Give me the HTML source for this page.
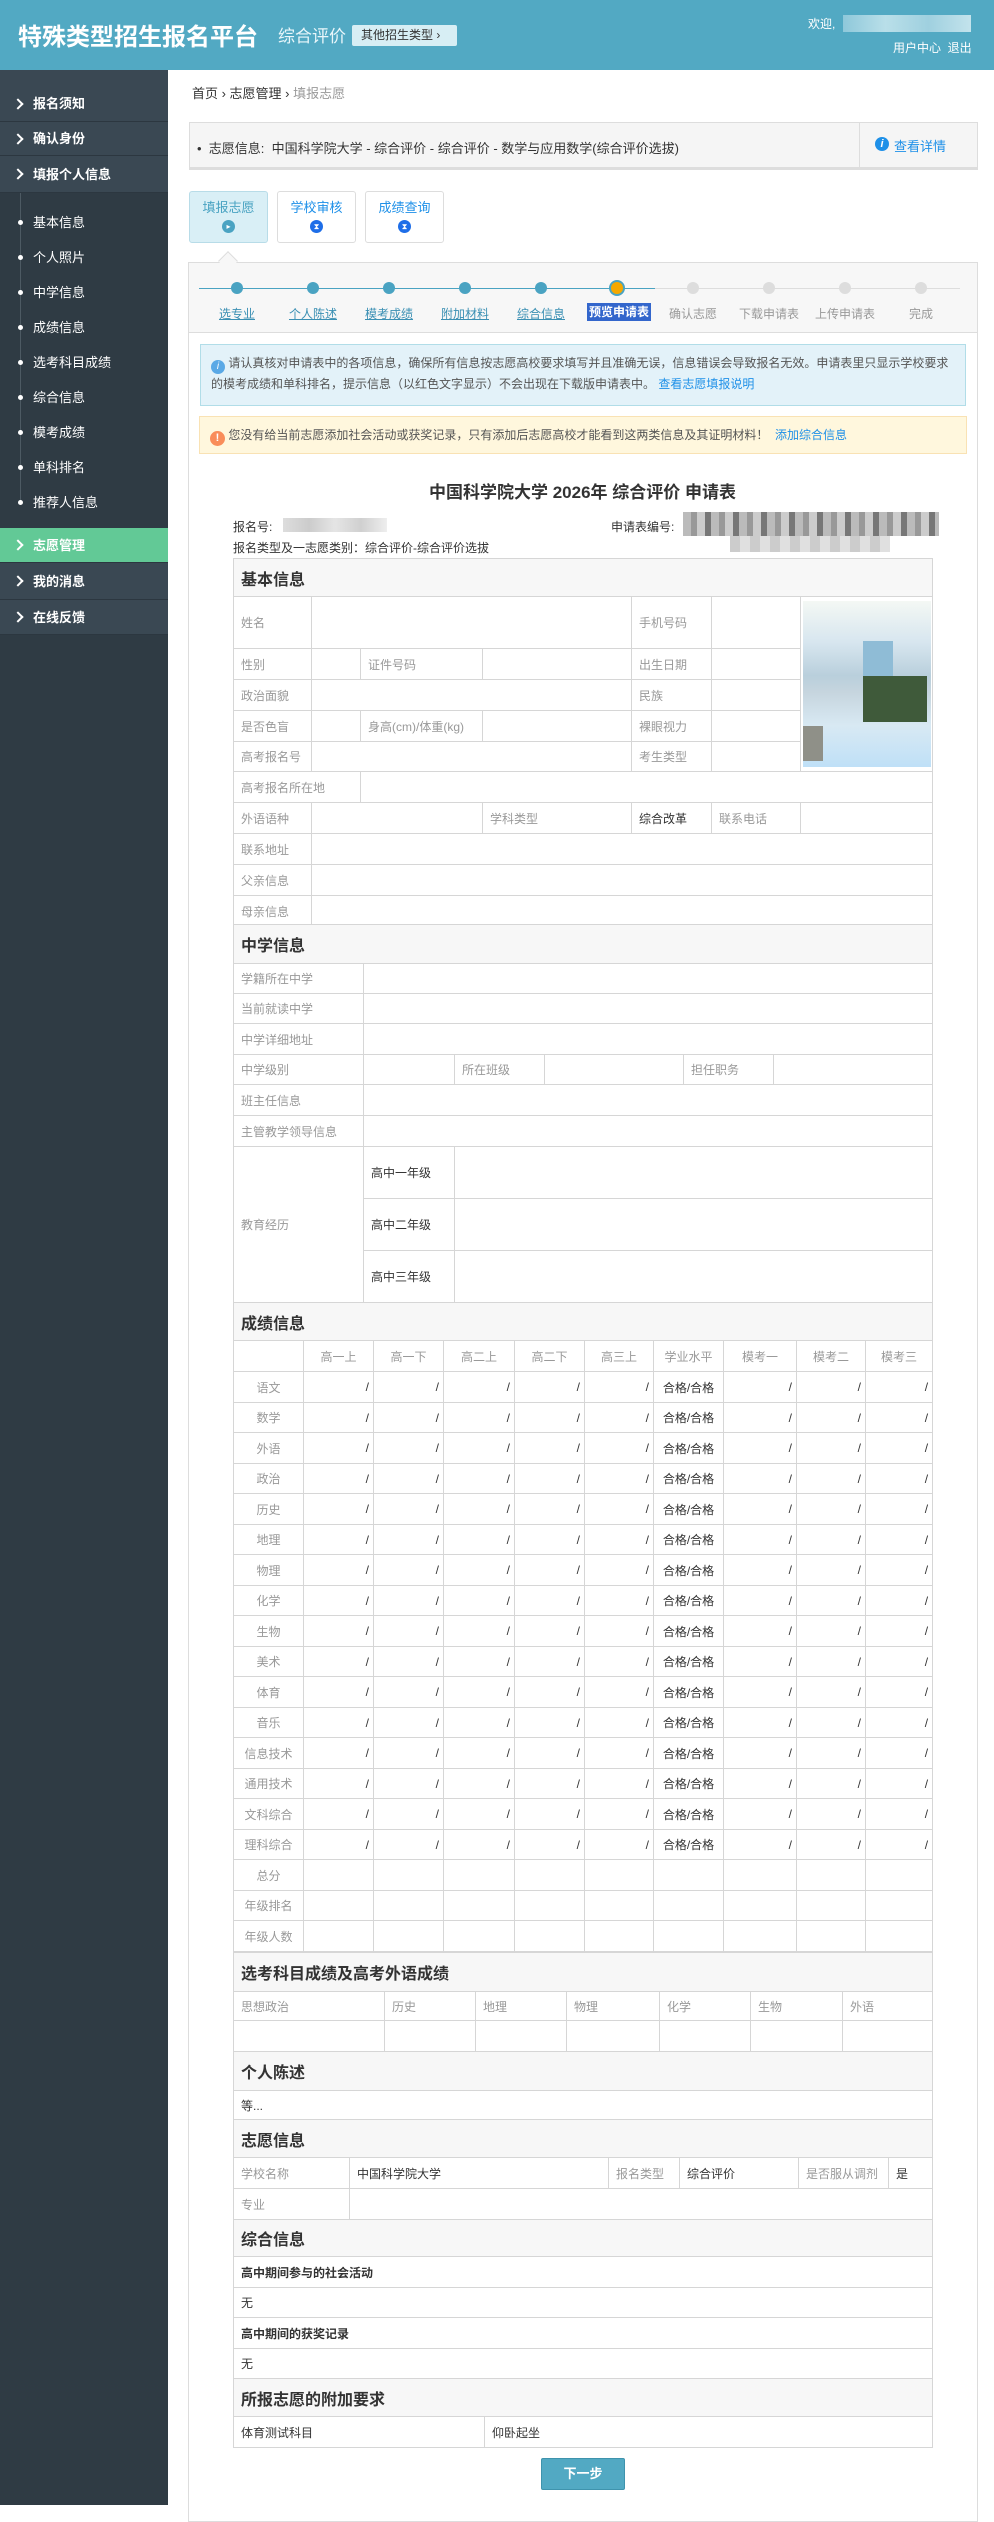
<!DOCTYPE html>
<html><head><meta charset="utf-8">
<style>
*{margin:0;padding:0;box-sizing:border-box}
body{width:994px;height:2505px;position:relative;background:#fff;font-family:"Liberation Sans","Noto Sans CJK SC",sans-serif;font-size:12px;color:#333;overflow:hidden}
.abs{position:absolute}
#hd{left:0;top:0;width:994px;height:70px;background:#52a9c3}
#sb{left:0;top:70px;width:168px;height:2435px;background:#2f3b44}
.top{position:absolute;left:0;width:168px;background:#3a4853;color:#fff;font-weight:bold;font-size:13px;padding-left:33px;border-bottom:1px solid #2c3740}
.top:before{content:"";position:absolute;left:14px;top:50%;width:6px;height:6px;border-right:2px solid #fff;border-top:2px solid #fff;transform:translateY(-50%) rotate(45deg)}
.top.first:before{top:34px}
.sub{position:absolute;left:33px;color:#fff;font-size:13px}
.sub:before{content:"";position:absolute;left:-15px;top:8px;width:5px;height:5px;border-radius:50%;background:#fff}
table{border-collapse:collapse;table-layout:fixed;position:absolute;left:233px;width:699px}
td{border:1px solid #d6d6d6;padding:0 7px;color:#999;font-size:12px;white-space:nowrap;overflow:hidden}
td.k{color:#333}
td.h{background:#f7f7f7;color:#333;font-size:16px;font-weight:bold;padding-left:7px}
.sc td{text-align:right;color:#333;padding-right:4px}
.sc td.l{text-align:center;color:#999;padding:0}
.sc td.c{text-align:center;padding:0}
.sc tr.hr td{text-align:center;color:#999;padding:0}
.sc tr{height:30px}
.sc tr.o{height:31px}
.step{position:absolute;top:282px;width:12px;height:12px;border-radius:50%;background:#4aa3c2}
.slab{position:absolute;top:305px;font-size:12px;color:#3a8fb3;text-decoration:underline;text-align:center;width:70px}
.blur{background:repeating-linear-gradient(90deg,#bbb 0 8px,#999 8px 14px,#ccc 14px 22px,#777 22px 28px)}
</style></head><body>
<div id="hd" class="abs">
<div class="abs" style="left:18px;top:17px;font-size:24px;font-weight:bold;color:#fff">特殊类型招生报名平台</div>
<div class="abs" style="left:278px;top:22px;font-size:17px;color:#e8f6fa">综合评价</div>
<div class="abs" style="left:352px;top:25px;width:105px;height:21px;background:#d7eef4;border-radius:2px;font-size:12px;color:#333;line-height:21px;padding-left:9px">其他招生类型 ›</div>
<div class="abs" style="left:808px;top:15px;font-size:12px;color:#fff">欢迎,</div>
<div class="abs" style="left:843px;top:15px;width:128px;height:17px;background:linear-gradient(90deg,#8ec8da,#b9dfe9,#9fd0df,#c3e3ec)"></div>
<div class="abs" style="left:893px;top:39px;font-size:12px;color:#fff">用户中心&nbsp;&nbsp;退出</div>
</div>
<div id="sb" class="abs">
<div class="top first" style="top:0;height:52px;line-height:36px;padding-top:16px">报名须知</div>
<div class="top" style="top:52px;height:34px;line-height:34px">确认身份</div>
<div class="top" style="top:86px;height:37px;line-height:37px">填报个人信息</div>
<div class="abs" style="left:20px;top:123px;width:1px;height:311px;background:#4d5a63"></div>
<div class="sub" style="top:142px">基本信息</div>
<div class="sub" style="top:177px">个人照片</div>
<div class="sub" style="top:212px">中学信息</div>
<div class="sub" style="top:247px">成绩信息</div>
<div class="sub" style="top:282px">选考科目成绩</div>
<div class="sub" style="top:317px">综合信息</div>
<div class="sub" style="top:352px">模考成绩</div>
<div class="sub" style="top:387px">单科排名</div>
<div class="sub" style="top:422px">推荐人信息</div>
<div class="top" style="top:458px;height:35px;line-height:35px;background:#62c996">志愿管理</div>
<div class="top" style="top:493px;height:37px;line-height:37px">我的消息</div>
<div class="top" style="top:530px;height:35px;line-height:35px">在线反馈</div>
</div>

<div class="abs" style="left:192px;top:83px;font-size:13px;color:#333">首页 › 志愿管理 › <span style="color:#999">填报志愿</span></div>

<div class="abs" style="left:189px;top:122px;width:789px;height:48px;background:#f5f5f5;border:1px solid #ddd;border-bottom:3px solid #ddd"></div>
<div class="abs" style="left:197px;top:138px;font-size:13px;color:#333">•&nbsp;&nbsp;志愿信息:&nbsp;&nbsp;中国科学院大学 - 综合评价 - 综合评价 - 数学与应用数学(综合评价选拔)</div>
<div class="abs" style="left:859px;top:123px;width:1px;height:45px;background:#ddd"></div>
<div class="abs" style="left:875px;top:137px;width:14px;height:14px;border-radius:50%;background:#1e90e8;color:#fff;font-size:11px;font-weight:bold;text-align:center;line-height:14px;font-style:italic">i</div>
<div class="abs" style="left:894px;top:136px;font-size:13px;color:#1e90e8">查看详情</div>

<div class="abs" style="left:189px;top:191px;width:79px;height:52px;background:#d9eff6;border:1px solid #b8dce8;border-radius:3px;text-align:center;color:#4aa3c2;font-size:13px;padding-top:5px">填报志愿<div style="width:13px;height:13px;border-radius:50%;background:#4aa3c2;margin:4px auto 0;color:#fff;font-size:8px;line-height:13px">▸</div></div>
<div class="abs" style="left:277px;top:191px;width:79px;height:52px;background:#fff;border:1px solid #ddd;border-radius:3px;text-align:center;color:#1e90e8;font-size:13px;padding-top:5px">学校审核<div style="width:13px;height:13px;border-radius:50%;background:#1e6ee8;margin:4px auto 0;color:#fff;font-size:8px;line-height:13px">⧗</div></div>
<div class="abs" style="left:365px;top:191px;width:79px;height:52px;background:#fff;border:1px solid #ddd;border-radius:3px;text-align:center;color:#1e90e8;font-size:13px;padding-top:5px">成绩查询<div style="width:13px;height:13px;border-radius:50%;background:#1e6ee8;margin:4px auto 0;color:#fff;font-size:8px;line-height:13px">⧗</div></div>

<div class="abs" style="left:188px;top:262px;width:790px;height:2260px;border:1px solid #ddd"></div>
<div class="abs" style="left:189px;top:263px;width:788px;height:70px;background:#f7f7f7;border-bottom:1px solid #ddd"></div>
<div class="abs" style="left:221px;top:254px;width:14px;height:14px;background:#f7f7f7;border-left:1px solid #ddd;border-top:1px solid #ddd;transform:rotate(45deg)"></div>
<div class="abs" style="left:199px;top:288px;width:456px;height:1px;background:#4aa3c2"></div>
<div class="abs" style="left:655px;top:288px;width:305px;height:1px;background:#ddd"></div>
<div class="step" style="left:231px"></div><div class="step" style="left:307px"></div><div class="step" style="left:383px"></div><div class="step" style="left:459px"></div><div class="step" style="left:535px"></div>
<div class="step" style="left:611px;background:#f5a800;box-shadow:0 0 0 2px #4aa3c2"></div>
<div class="step" style="left:687px;background:#ddd"></div><div class="step" style="left:763px;background:#ddd"></div><div class="step" style="left:839px;background:#ddd"></div><div class="step" style="left:915px;background:#ddd"></div>
<div class="slab" style="left:202px">选专业</div><div class="slab" style="left:278px">个人陈述</div><div class="slab" style="left:354px">模考成绩</div><div class="slab" style="left:430px">附加材料</div><div class="slab" style="left:506px">综合信息</div>
<div class="abs" style="left:587px;top:303px;width:64px;height:18px;background:#3366cc;color:#fff;font-weight:bold;text-align:center;line-height:18px;font-size:12px">预览申请表</div>
<div class="slab" style="left:658px;color:#999;text-decoration:none">确认志愿</div><div class="slab" style="left:734px;color:#999;text-decoration:none">下载申请表</div><div class="slab" style="left:810px;color:#999;text-decoration:none">上传申请表</div><div class="slab" style="left:886px;color:#999;text-decoration:none">完成</div>

<div class="abs" style="left:200px;top:344px;width:766px;height:62px;background:#e3f2f9;border:1px solid #b1dde8;padding:8px 10px;font-size:12px;color:#555;line-height:21px"><span style="display:inline-block;width:14px;height:14px;border-radius:50%;background:#5aa9e6;color:#fff;text-align:center;line-height:14px;font-size:10px;font-style:italic;vertical-align:-2px">i</span> 请认真核对申请表中的各项信息，确保所有信息按志愿高校要求填写并且准确无误，信息错误会导致报名无效。申请表里只显示学校要求的模考成绩和单科排名，提示信息（以红色文字显示）不会出现在下载版申请表中。 <span style="color:#1e90e8">查看志愿填报说明</span></div>
<div class="abs" style="left:199px;top:416px;width:768px;height:38px;background:#fff7dd;border:1px solid #f9e2b4;padding:0 10px;font-size:12px;color:#555;line-height:36px"><span style="display:inline-block;width:15px;height:15px;border-radius:50%;background:#f98d5a;color:#fff;text-align:center;line-height:15px;font-size:11px;font-weight:bold;vertical-align:-2px">!</span> 您没有给当前志愿添加社会活动或获奖记录，只有添加后志愿高校才能看到这两类信息及其证明材料！ &nbsp;<span style="color:#1e90e8">添加综合信息</span></div>

<div class="abs" style="left:233px;top:478px;width:699px;text-align:center;font-size:17px;font-weight:bold;color:#333">中国科学院大学 2026年 综合评价 申请表</div>
<div class="abs" style="left:233px;top:518px;font-size:12px;color:#333">报名号:</div>
<div class="abs" style="left:283px;top:518px;width:104px;height:14px;background:linear-gradient(90deg,#ddd,#ccc,#e5e5e5,#d0d0d0,#eee)"></div>
<div class="abs" style="left:611px;top:518px;font-size:12px;color:#333">申请表编号:</div>
<div class="abs blur" style="left:683px;top:512px;width:256px;height:24px"></div>
<div class="abs" style="left:730px;top:536px;width:160px;height:16px;background:repeating-linear-gradient(90deg,#ccc 0 10px,#e0e0e0 10px 20px)"></div>
<div class="abs" style="left:233px;top:539px;font-size:12px;color:#333">报名类型及一志愿类别：综合评价-综合评价选拔</div>

<table style="top:558px">
<colgroup><col style="width:78px"><col style="width:49px"><col style="width:122px"><col style="width:149px"><col style="width:80px"><col style="width:89px"><col style="width:132px"></colgroup>
<tr style="height:38px"><td class="h" colspan="7">基本信息</td></tr>
<tr style="height:52px"><td>姓名</td><td colspan="3"></td><td>手机号码</td><td></td><td rowspan="5" style="padding:4px 2px;border-right:1px solid #d6d6d6"><div style="width:128px;height:166px;background:linear-gradient(180deg,#f4f8f4 0%,#d7e6ef 25%,#b9cfdc 45%,#c6d5de 55%,#d8e9f3 75%,#bfe0f7 100%);position:relative"><div style="position:absolute;left:60px;top:40px;width:30px;height:45px;background:#8fbcd6"></div><div style="position:absolute;left:60px;top:75px;width:64px;height:46px;background:#3f5a3a"></div><div style="position:absolute;left:0;top:125px;width:20px;height:35px;background:#8f9088"></div></div></td></tr>
<tr style="height:31px"><td>性别</td><td></td><td>证件号码</td><td></td><td>出生日期</td><td></td></tr>
<tr style="height:31px"><td>政治面貌</td><td colspan="3"></td><td>民族</td><td></td></tr>
<tr style="height:31px"><td>是否色盲</td><td></td><td>身高(cm)/体重(kg)</td><td></td><td>裸眼视力</td><td></td></tr>
<tr style="height:30px"><td>高考报名号</td><td colspan="3"></td><td>考生类型</td><td></td></tr>
<tr style="height:31px"><td colspan="2">高考报名所在地</td><td colspan="5"></td></tr>
<tr style="height:31px"><td>外语语种</td><td colspan="2"></td><td>学科类型</td><td class="k">综合改革</td><td>联系电话</td><td></td></tr>
<tr style="height:31px"><td>联系地址</td><td colspan="6"></td></tr>
<tr style="height:31px"><td>父亲信息</td><td colspan="6"></td></tr>
<tr style="height:31px"><td>母亲信息</td><td colspan="6"></td></tr>
</table>

<table style="top:924px">
<colgroup><col style="width:130px"><col style="width:91px"><col style="width:90px"><col style="width:139px"><col style="width:90px"><col style="width:159px"></colgroup>
<tr style="height:39px"><td class="h" colspan="6">中学信息</td></tr>
<tr style="height:30px"><td>学籍所在中学</td><td colspan="5"></td></tr>
<tr style="height:30px"><td>当前就读中学</td><td colspan="5"></td></tr>
<tr style="height:31px"><td>中学详细地址</td><td colspan="5"></td></tr>
<tr style="height:30px"><td>中学级别</td><td></td><td>所在班级</td><td></td><td>担任职务</td><td></td></tr>
<tr style="height:31px"><td>班主任信息</td><td colspan="5"></td></tr>
<tr style="height:31px"><td>主管教学领导信息</td><td colspan="5"></td></tr>
<tr style="height:52px"><td rowspan="3">教育经历</td><td class="k">高中一年级</td><td colspan="4"></td></tr>
<tr style="height:52px"><td class="k">高中二年级</td><td colspan="4"></td></tr>
<tr style="height:52px"><td class="k">高中三年级</td><td colspan="4"></td></tr>
</table>

<table class="sc" style="top:1302px">
<colgroup><col style="width:70px"><col style="width:70px"><col style="width:70px"><col style="width:71px"><col style="width:70px"><col style="width:69px"><col style="width:70px"><col style="width:73px"><col style="width:69px"><col style="width:67px"></colgroup>
<tr style="height:38px"><td class="h" colspan="10" style="text-align:left;color:#333;padding-left:7px">成绩信息</td></tr>
<tr class="hr o"><td></td><td>高一上</td><td>高一下</td><td>高二上</td><td>高二下</td><td>高三上</td><td>学业水平</td><td>模考一</td><td>模考二</td><td>模考三</td></tr>
<tr class="o"><td class="l">语文</td><td>/</td><td>/</td><td>/</td><td>/</td><td>/</td><td class="c">合格/合格</td><td>/</td><td>/</td><td>/</td></tr>
<tr><td class="l">数学</td><td>/</td><td>/</td><td>/</td><td>/</td><td>/</td><td class="c">合格/合格</td><td>/</td><td>/</td><td>/</td></tr>
<tr class="o"><td class="l">外语</td><td>/</td><td>/</td><td>/</td><td>/</td><td>/</td><td class="c">合格/合格</td><td>/</td><td>/</td><td>/</td></tr>
<tr><td class="l">政治</td><td>/</td><td>/</td><td>/</td><td>/</td><td>/</td><td class="c">合格/合格</td><td>/</td><td>/</td><td>/</td></tr>
<tr class="o"><td class="l">历史</td><td>/</td><td>/</td><td>/</td><td>/</td><td>/</td><td class="c">合格/合格</td><td>/</td><td>/</td><td>/</td></tr>
<tr><td class="l">地理</td><td>/</td><td>/</td><td>/</td><td>/</td><td>/</td><td class="c">合格/合格</td><td>/</td><td>/</td><td>/</td></tr>
<tr class="o"><td class="l">物理</td><td>/</td><td>/</td><td>/</td><td>/</td><td>/</td><td class="c">合格/合格</td><td>/</td><td>/</td><td>/</td></tr>
<tr><td class="l">化学</td><td>/</td><td>/</td><td>/</td><td>/</td><td>/</td><td class="c">合格/合格</td><td>/</td><td>/</td><td>/</td></tr>
<tr class="o"><td class="l">生物</td><td>/</td><td>/</td><td>/</td><td>/</td><td>/</td><td class="c">合格/合格</td><td>/</td><td>/</td><td>/</td></tr>
<tr><td class="l">美术</td><td>/</td><td>/</td><td>/</td><td>/</td><td>/</td><td class="c">合格/合格</td><td>/</td><td>/</td><td>/</td></tr>
<tr class="o"><td class="l">体育</td><td>/</td><td>/</td><td>/</td><td>/</td><td>/</td><td class="c">合格/合格</td><td>/</td><td>/</td><td>/</td></tr>
<tr><td class="l">音乐</td><td>/</td><td>/</td><td>/</td><td>/</td><td>/</td><td class="c">合格/合格</td><td>/</td><td>/</td><td>/</td></tr>
<tr class="o"><td class="l">信息技术</td><td>/</td><td>/</td><td>/</td><td>/</td><td>/</td><td class="c">合格/合格</td><td>/</td><td>/</td><td>/</td></tr>
<tr><td class="l">通用技术</td><td>/</td><td>/</td><td>/</td><td>/</td><td>/</td><td class="c">合格/合格</td><td>/</td><td>/</td><td>/</td></tr>
<tr class="o"><td class="l">文科综合</td><td>/</td><td>/</td><td>/</td><td>/</td><td>/</td><td class="c">合格/合格</td><td>/</td><td>/</td><td>/</td></tr>
<tr><td class="l">理科综合</td><td>/</td><td>/</td><td>/</td><td>/</td><td>/</td><td class="c">合格/合格</td><td>/</td><td>/</td><td>/</td></tr>
<tr class="o"><td class="l">总分</td><td></td><td></td><td></td><td></td><td></td><td></td><td></td><td></td><td></td></tr>
<tr><td class="l">年级排名</td><td></td><td></td><td></td><td></td><td></td><td></td><td></td><td></td><td></td></tr>
<tr class="o"><td class="l">年级人数</td><td></td><td></td><td></td><td></td><td></td><td></td><td></td><td></td><td></td></tr>
</table>

<table style="top:1952px">
<colgroup><col style="width:151px"><col style="width:91px"><col style="width:91px"><col style="width:93px"><col style="width:91px"><col style="width:92px"><col style="width:90px"></colgroup>
<tr style="height:39px"><td class="h" colspan="7">选考科目成绩及高考外语成绩</td></tr>
<tr style="height:29px"><td>思想政治</td><td>历史</td><td>地理</td><td>物理</td><td>化学</td><td>生物</td><td>外语</td></tr>
<tr style="height:31px"><td></td><td></td><td></td><td></td><td></td><td></td><td></td></tr>
</table>

<table style="top:2051px">
<colgroup><col style="width:116px"><col style="width:259px"><col style="width:71px"><col style="width:119px"><col style="width:90px"><col style="width:44px"></colgroup>
<tr style="height:39px"><td class="h" colspan="6">个人陈述</td></tr>
<tr style="height:29px"><td class="k" colspan="6">等...</td></tr>
<tr style="height:38px"><td class="h" colspan="6">志愿信息</td></tr>
<tr style="height:31px"><td>学校名称</td><td class="k">中国科学院大学</td><td>报名类型</td><td class="k">综合评价</td><td>是否服从调剂</td><td class="k">是</td></tr>
<tr style="height:31px"><td>专业</td><td colspan="5"></td></tr>
<tr style="height:37px"><td class="h" colspan="6">综合信息</td></tr>
<tr style="height:31px"><td class="k" colspan="6" style="font-weight:bold">高中期间参与的社会活动</td></tr>
<tr style="height:30px"><td class="k" colspan="6">无</td></tr>
<tr style="height:31px"><td class="k" colspan="6" style="font-weight:bold">高中期间的获奖记录</td></tr>
<tr style="height:30px"><td class="k" colspan="6">无</td></tr>
<tr style="height:38px"><td class="h" colspan="6">所报志愿的附加要求</td></tr>
</table>
<table style="top:2416px">
<colgroup><col style="width:251px"><col style="width:448px"></colgroup>
<tr style="height:31px"><td class="k">体育测试科目</td><td class="k">仰卧起坐</td></tr>
</table>

<div class="abs" style="left:541px;top:2458px;width:84px;height:32px;background:#52a9c3;border:1px solid #3f93ad;border-radius:2px;color:#fff;font-weight:bold;font-size:13px;text-align:center;line-height:30px">下一步</div>
</body></html>
